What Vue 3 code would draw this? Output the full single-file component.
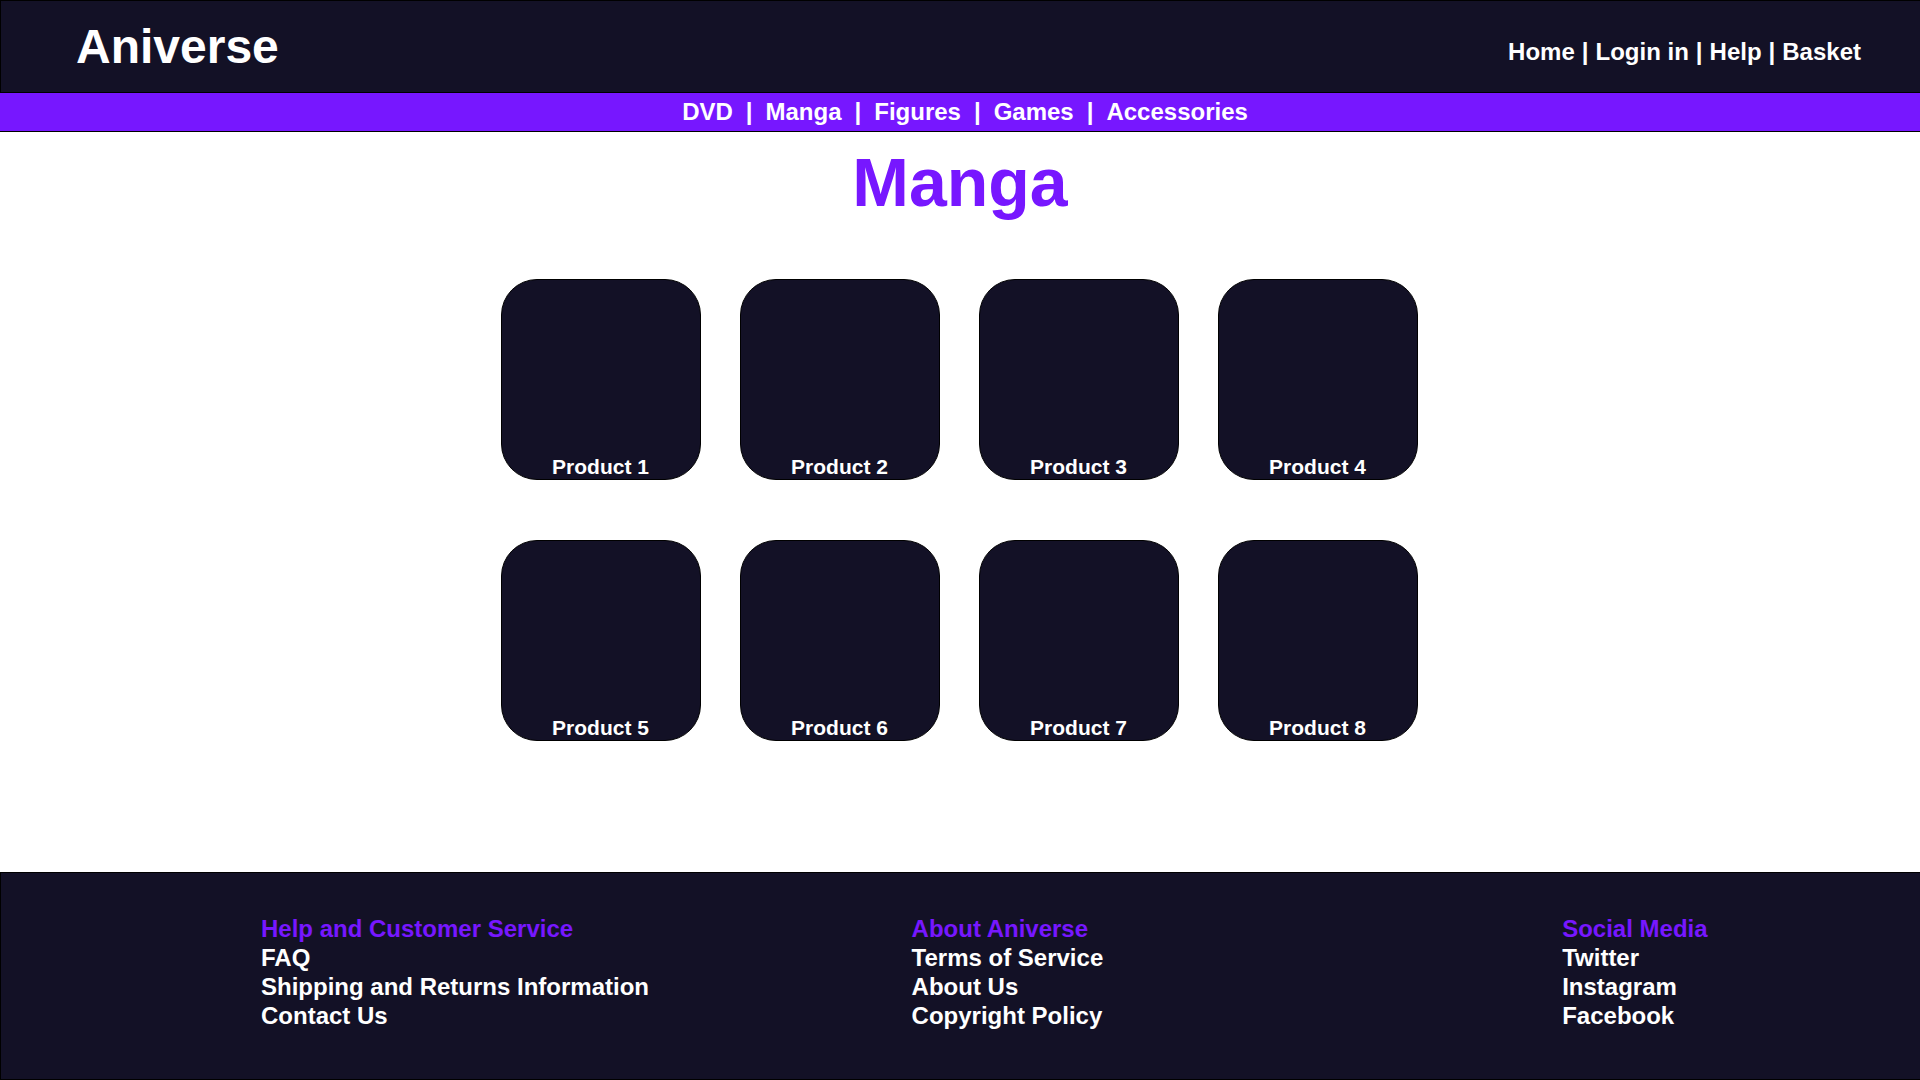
<script setup>
const accountLinks = ['Home', 'Login in', 'Help', 'Basket']
const categories = ['DVD', 'Manga', 'Figures', 'Games', 'Accessories']
const products = Array.from({ length: 8 }, (_, i) => `Product ${i + 1}`)
const footerColumns = [
  {
    title: 'Help and Customer Service',
    links: ['FAQ', 'Shipping and Returns Information', 'Contact Us'],
  },
  {
    title: 'About Aniverse',
    links: ['Terms of Service', 'About Us', 'Copyright Policy'],
  },
  {
    title: 'Social Media',
    links: ['Twitter', 'Instagram', 'Facebook'],
  },
]
</script>

<template>
  <div class="page">
    <header class="header">
      <a class="logo" href="#">Aniverse</a>
      <nav class="links account" aria-label="Account">
        <template v-for="(link, i) in accountLinks" :key="link">
          <span v-if="i > 0">|</span>
          <a href="#">{{ link }}</a>
        </template>
      </nav>
    </header>

    <nav class="links categories" aria-label="Categories">
      <template v-for="(category, i) in categories" :key="category">
        <span v-if="i > 0">|</span>
        <a href="#">{{ category }}</a>
      </template>
    </nav>

    <main class="main">
      <h1 class="title">Manga</h1>
      <div class="products">
        <a v-for="product in products" :key="product" class="card" href="#">{{ product }}</a>
      </div>
    </main>

    <footer class="footer">
      <section v-for="column in footerColumns" :key="column.title">
        <h2 class="footer-title">{{ column.title }}</h2>
        <ul class="footer-list">
          <li v-for="link in column.links" :key="link"><a href="#">{{ link }}</a></li>
        </ul>
      </section>
    </footer>
  </div>
</template>

<style>
body {
  margin: 0;
  background: #fff;
}
</style>

<style scoped>
.page {
  display: flex;
  flex-direction: column;
  min-height: 100vh;
  font-family: 'Arial Rounded MT Bold', 'Liberation Sans', Arial, sans-serif;
  font-size: 24px;
  font-weight: 700;
  line-height: 29px;
  color: #fff;
}

a {
  color: inherit;
  text-decoration: none;
}

.header {
  box-sizing: border-box;
  display: flex;
  align-items: center;
  justify-content: space-between;
  height: 93px;
  padding: 0 59px 0 75px;
  border: 1px solid #000;
  border-right: 0;
  background: #131126;
}

.logo {
  font-size: 48px;
  line-height: 56px;
}

.links {
  display: flex;
  align-items: center;
}

.account {
  gap: 7px;
  padding-top: 10px;
}

.categories {
  box-sizing: border-box;
  justify-content: center;
  gap: 13px;
  height: 39px;
  padding: 0 0 2px 10px;
  border-bottom: 1px solid #000;
  background: #7717ff;
}

.main {
  flex: 1;
  padding: 12px 0 80px;
}

.title {
  margin: 0;
  font-size: 68px;
  line-height: 76px;
  text-align: center;
  color: #7717ff;
}

.products {
  display: grid;
  grid-template-columns: repeat(4, 200px);
  justify-content: center;
  gap: 60px 39px;
  margin-top: 59px;
  padding-right: 2px;
}

.card {
  box-sizing: border-box;
  display: flex;
  align-items: flex-end;
  justify-content: center;
  height: 201px;
  border: 1px solid #000;
  border-radius: 36px;
  background: #131126;
  font-size: 21px;
  line-height: 24px;
}

.footer {
  box-sizing: border-box;
  display: grid;
  grid-template-columns: 20fr 20fr 11fr;
  min-height: 208px;
  padding: 41px 0 48px 260px;
  border: 1px solid #000;
  border-right: 0;
  background: #131126;
}

.footer-title {
  margin: 0;
  font-size: 24px;
  line-height: 29px;
  color: #7717ff;
}

.footer-list {
  margin: 0;
  padding: 0;
  list-style: none;
}
</style>
